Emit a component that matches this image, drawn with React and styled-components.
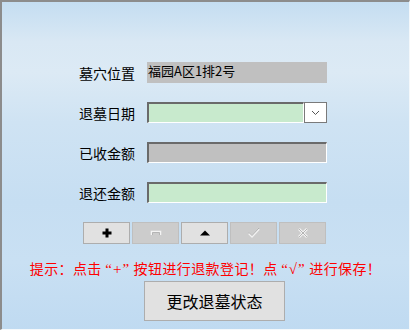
import styled, { createGlobalStyle } from "styled-components";

const GlobalStyle = createGlobalStyle`
  html, body {
    margin: 0;
    padding: 0;
  }
  body {
    font-family: "Noto Sans CJK SC", "Noto Sans", sans-serif;
  }
`;

const Window = styled.div`
  width: 410px;
  height: 330px;
  box-sizing: border-box;
  border-top: 2px solid #8c8c8c;
  border-left: 2px solid #8c8c8c;
  border-right: 1px solid #f4f8fb;
  border-bottom: 1px solid #f4f8fb;
  background: linear-gradient(
    to bottom,
    #c4ddf1 0px,
    #d9e8f4 40px,
    #dceaf5 70px,
    #cfe3f3 120px,
    #c6def2 200px,
    #c9e0f3 260px,
    #bfdaf1 330px
  );
  display: flex;
  flex-direction: column;
  padding-top: 60px;
`;

const Form = styled.div`
  display: grid;
  grid-template-columns: 68px 180px;
  grid-auto-rows: 21px;
  row-gap: 19px;
  margin-left: 77px;
`;

const Label = styled.div`
  display: flex;
  align-items: center;
  font-size: 14px;
  color: #000;
  white-space: nowrap;
`;

const Field = styled.div`
  box-sizing: border-box;
  height: 21px;
  background: ${({ $green }) => ($green ? "#c8eacd" : "#c0c0c0")};
  border-top: ${({ $flat }) => ($flat ? "none" : "2px solid #6a6a6a")};
  border-left: ${({ $flat }) => ($flat ? "none" : "2px solid #6a6a6a")};
  border-right: ${({ $flat }) => ($flat ? "none" : "1px solid #ffffff")};
  border-bottom: ${({ $flat }) => ($flat ? "none" : "1px solid #ffffff")};
  font-size: 13px;
  line-height: 15px;
  padding-left: 1px;
  padding-top: 1px;
  color: #000;
  flex: 1;
`;

const Combo = styled.div`
  display: flex;
  height: 21px;
`;

const DropButton = styled.div`
  box-sizing: border-box;
  width: 23px;
  height: 21px;
  background: #ffffff;
  border: 1px solid #7a7a7a;
  display: flex;
  align-items: center;
  justify-content: center;
`;

const ToolRow = styled.div`
  display: flex;
  gap: 2px;
  margin-left: 81px;
  margin-top: 19px;
`;

const ToolButton = styled.div`
  box-sizing: border-box;
  width: 47px;
  height: 22px;
  background: ${({ $disabled }) => ($disabled ? "#cccccc" : "#e1e1e1")};
  border: 1px solid ${({ $disabled }) => ($disabled ? "#bfbfbf" : "#adadad")};
  display: flex;
  align-items: center;
  justify-content: center;
`;

const Hint = styled.div`
  margin-top: 16px;
  text-align: center;
  color: #ff0000;
  font-size: 14px;
  line-height: 16px;
  letter-spacing: 0.4px;
  white-space: nowrap;
`;

const Quote = styled.span`
  font-family: "Liberation Serif", serif;
  font-size: 15px;
  letter-spacing: 1px;
`;

const BigButton = styled.div`
  box-sizing: border-box;
  width: 141px;
  height: 40px;
  margin-left: 142px;
  margin-top: 4px;
  background: #e1e1e1;
  border: 1px solid #adadad;
  display: flex;
  align-items: center;
  justify-content: center;
  font-size: 16px;
  color: #000;
`;

function Chevron() {
  return (
    <svg width="9" height="6" viewBox="0 0 9 6">
      <path d="M1 1 L4.5 4.5 L8 1" fill="none" stroke="#555" strokeWidth="1" />
    </svg>
  );
}

function PlusIcon() {
  return (
    <svg width="10" height="10" viewBox="0 0 10 10">
      <rect x="3.5" y="0.5" width="3" height="9" fill="#000" />
      <rect x="0.5" y="3.5" width="9" height="3" fill="#000" />
    </svg>
  );
}

function MinusIcon() {
  return (
    <svg width="12" height="6" viewBox="0 0 12 6">
      <path d="M1.5 5 V1.5 H10.5 V5" fill="none" stroke="#f4f4f4" strokeWidth="1.5" />
      <path d="M2.5 5 V2.5 H9.5 V5" fill="none" stroke="#b4b4b4" strokeWidth="1" />
    </svg>
  );
}

function UpIcon() {
  return (
    <svg width="10" height="6" viewBox="0 0 10 6">
      <path d="M0 5.5 L5 0.5 L10 5.5 Z" fill="#000" />
    </svg>
  );
}

function CheckIcon() {
  return (
    <svg width="14" height="12" viewBox="0 0 14 12">
      <path d="M2 6.5 L5 9.5 L12 2" fill="none" stroke="#f2f2f2" strokeWidth="2" />
      <path d="M2 5.5 L5 8.5 L12 1" fill="none" stroke="#b0b0b0" strokeWidth="1" />
    </svg>
  );
}

function CrossIcon() {
  return (
    <svg width="12" height="12" viewBox="0 0 12 12">
      <path d="M2 2 L10 10 M10 2 L2 10" fill="none" stroke="#f2f2f2" strokeWidth="2.5" />
      <path d="M2 2 L10 10 M10 2 L2 10" fill="none" stroke="#b4b4b4" strokeWidth="1" />
    </svg>
  );
}

export default function App() {
  return (
    <>
      <GlobalStyle />
      <Window>
        <Form>
          <Label>墓穴位置</Label>
          <Field $flat>福园A区1排2号</Field>

          <Label>退墓日期</Label>
          <Combo>
            <Field $green />
            <DropButton>
              <Chevron />
            </DropButton>
          </Combo>

          <Label>已收金额</Label>
          <Field />

          <Label>退还金额</Label>
          <Field $green />
        </Form>

        <ToolRow>
          <ToolButton><PlusIcon /></ToolButton>
          <ToolButton $disabled><MinusIcon /></ToolButton>
          <ToolButton><UpIcon /></ToolButton>
          <ToolButton $disabled><CheckIcon /></ToolButton>
          <ToolButton $disabled><CrossIcon /></ToolButton>
        </ToolRow>

        <Hint>
          提示：点击 <Quote>“+”</Quote> 按钮进行退款登记！点 <Quote>“√”</Quote> 进行保存！
        </Hint>

        <BigButton>更改退墓状态</BigButton>
      </Window>
    </>
  );
}
